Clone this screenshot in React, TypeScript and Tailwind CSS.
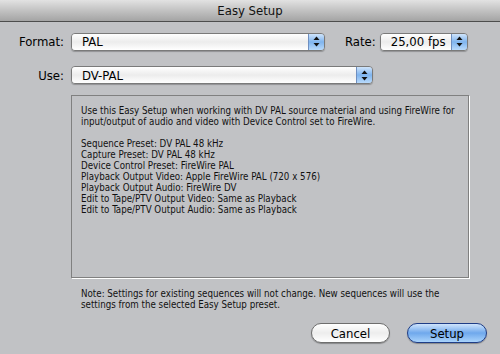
import React from "react";

const font = "font-['Lucida_Grande','DejaVu_Sans_Condensed','DejaVu_Sans',sans-serif] [font-stretch:condensed]";

function Arrows() {
    return (
        <svg width="7" height="11" viewBox="0 0 7 11">
            <path d="M3.5 0.5 L6.5 4 L0.5 4 Z" fill="#111" />
            <path d="M3.5 10.5 L6.5 7 L0.5 7 Z" fill="#111" />
        </svg>
    );
}

function Popup({label, width}: {label: string; width: string}) {
    return (
        <div
            className={`${width} h-[18px] flex rounded-[4px] border border-[#7a7a7a] overflow-hidden shadow-[0_1px_1px_rgba(0,0,0,0.25)]`}
        >
            <div className="flex-1 flex items-center pl-[10px] whitespace-nowrap text-[13px] text-black bg-gradient-to-b from-[#ffffff] via-[#ececec] to-[#ffffff]">
                {label}
            </div>
            <div className="w-[16px] flex items-center justify-center border-l border-[#6f8fc0] bg-gradient-to-b from-[#cfe4fb] via-[#7fb4ee] to-[#b9dafb]">
                <Arrows/>
            </div>
        </div>
    );
}

export default function App() {
    return (
        <div className={`w-[500px] h-[354px] bg-[#c1c2c5] flex flex-col text-black ${font}`}>
            <div className="h-[22px] shrink-0 flex items-center justify-center border-b border-[#4d4d4d] bg-gradient-to-b from-[#e2e2e2] via-[#c2c2c2] to-[#a4a4a4] text-[13px] text-[#111]">
                Easy Setup
            </div>

            <div className="flex items-center mt-[10px]">
                <div className="w-[64px] text-right text-[13px]">Format:</div>
                <div className="ml-[7px]">
                    <Popup label="PAL" width="w-[254px]"/>
                </div>
                <div className="ml-[20px] text-[13px]">Rate:</div>
                <div className="ml-[4px]">
                    <Popup label="25,00 fps" width="w-[88px]"/>
                </div>
            </div>

            <div className="flex items-center mt-[14px]">
                <div className="w-[64px] text-right text-[13px]">Use:</div>
                <div className="ml-[7px]">
                    <Popup label="DV-PAL" width="w-[302px]"/>
                </div>
            </div>

            <div className="ml-[71px] mt-[10px] w-[398px] h-[183px] border border-[#808080] shadow-[1px_1px_0_#ffffff] pl-[9px] pt-[9px] text-[9.7px] leading-[11px] text-[#111] whitespace-nowrap">
                <p>
                    Use this Easy Setup when working with DV PAL source material and using FireWire for
                    <br/>
                    input/output of audio and video with Device Control set to FireWire.
                </p>
                <p className="mt-[11px]">Sequence Preset: DV PAL 48 kHz</p>
                <p>Capture Preset: DV PAL 48 kHz</p>
                <p>Device Control Preset: FireWire PAL</p>
                <p>Playback Output Video: Apple FireWire PAL (720 x 576)</p>
                <p>Playback Output Audio: FireWire DV</p>
                <p>Edit to Tape/PTV Output Video: Same as Playback</p>
                <p>Edit to Tape/PTV Output Audio: Same as Playback</p>
            </div>

            <p className="ml-[81px] mt-[10px] text-[9.7px] leading-[11px] text-[#111] whitespace-nowrap">
                Note: Settings for existing sequences will not change. New sequences will use the
                <br/>
                settings from the selected Easy Setup preset.
            </p>

            <div className="flex justify-end gap-[17px] pr-[13px] mt-[13px]">
                <button className="w-[79px] h-[20px] rounded-full border border-[#6e6e6e] bg-gradient-to-b from-[#ffffff] via-[#ededed] to-[#ffffff] text-[13px] leading-none shadow-[0_1px_1px_rgba(0,0,0,0.3)]">
                    Cancel
                </button>
                <button className="w-[80px] h-[20px] rounded-full border border-[#1f3d86] bg-gradient-to-b from-[#cfe4fb] via-[#6fa8ec] to-[#a9d3fb] text-[13px] leading-none shadow-[0_1px_1px_rgba(0,0,0,0.3)]">
                    Setup
                </button>
            </div>
        </div>
    );
}
